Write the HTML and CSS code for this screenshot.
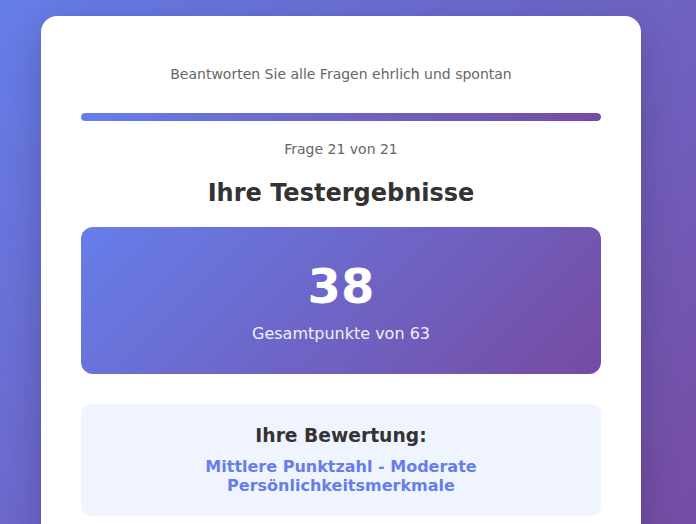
FILE: index.html
```html
<!DOCTYPE html>
<html lang="de">
<head>
    <meta charset="UTF-8">
    <meta name="viewport" content="width=device-width, initial-scale=1.0">
    <title>Persönlichkeitstest</title>
    <link rel="stylesheet" href="styles.css">
</head>
<body>

<div class="container">
    <p class="subtitle">Beantworten Sie alle Fragen ehrlich und spontan</p>

    <div class="progress-bar">
        <div class="progress-fill" style="width: 100%;"></div>
    </div>
    <p class="question-counter">Frage 21 von 21</p>

    <!-- Ergebnis -->
    <div class="results">
        <h2>Ihre Testergebnisse</h2>
        <div class="score-box">
            <div class="score">38</div>
            <div class="score-label">Gesamtpunkte von 63</div>
        </div>
        <div class="evaluation">
            <h3>Ihre Bewertung:</h3>
            <p class="evaluation-text">Mittlere Punktzahl - Moderate Persönlichkeitsmerkmale</p>
        </div>
    </div>
</div>

</body>
</html>
```

FILE: styles.css
```css
body {
    font-family: "DejaVu Sans", Verdana, sans-serif;
    margin: 0;
    padding: 16px 14px 0 0;
    min-height: 100vh;
    box-sizing: border-box;
    background: linear-gradient(135deg, #667eea 0%, #764ba2 100%);
}
.container {
    width: 600px;
    box-sizing: border-box;
    margin: 0 auto;
    padding: 48px 40px 40px;
    background: white;
    border-radius: 16px;
    box-shadow: 0 10px 40px rgba(0, 0, 0, 0.2);
}
.subtitle {
    margin: 0;
    text-align: center;
    color: #666;
    font-size: 14px;
    line-height: 20px;
}
.progress-bar {
    margin-top: 29px;
    height: 8px;
    background: #e0e0e0;
    border-radius: 4px;
    overflow: hidden;
}
.progress-fill {
    height: 100%;
    background: linear-gradient(90deg, #667eea, #764ba2);
    border-radius: 4px;
}
.question-counter {
    margin: 18px 0 0;
    text-align: center;
    color: #666;
    font-size: 14px;
    line-height: 20px;
}
.results h2 {
    margin: 19px 0 19px;
    text-align: center;
    color: #333;
    font-size: 24px;
    line-height: 30px;
}
.score-box {
    padding: 31px 20px 30px;
    border-radius: 12px;
    text-align: center;
    color: white;
    background: linear-gradient(135deg, #667eea 0%, #764ba2 100%);
}
.score {
    font-size: 48px;
    font-weight: bold;
    line-height: 56px;
}
.score-label {
    margin-top: 10px;
    font-size: 16px;
    line-height: 20px;
    opacity: 0.9;
}
.evaluation {
    margin-top: 30px;
    padding: 21px 20px 21px;
    background: #f0f4ff;
    border-radius: 10px;
    text-align: center;
}
.evaluation h3 {
    margin: 0;
    color: #333;
    font-size: 18.72px;
    line-height: 22px;
}
.evaluation-text {
    margin: 10px 0 0;
    color: #667eea;
    font-size: 16px;
    font-weight: bold;
}
```
